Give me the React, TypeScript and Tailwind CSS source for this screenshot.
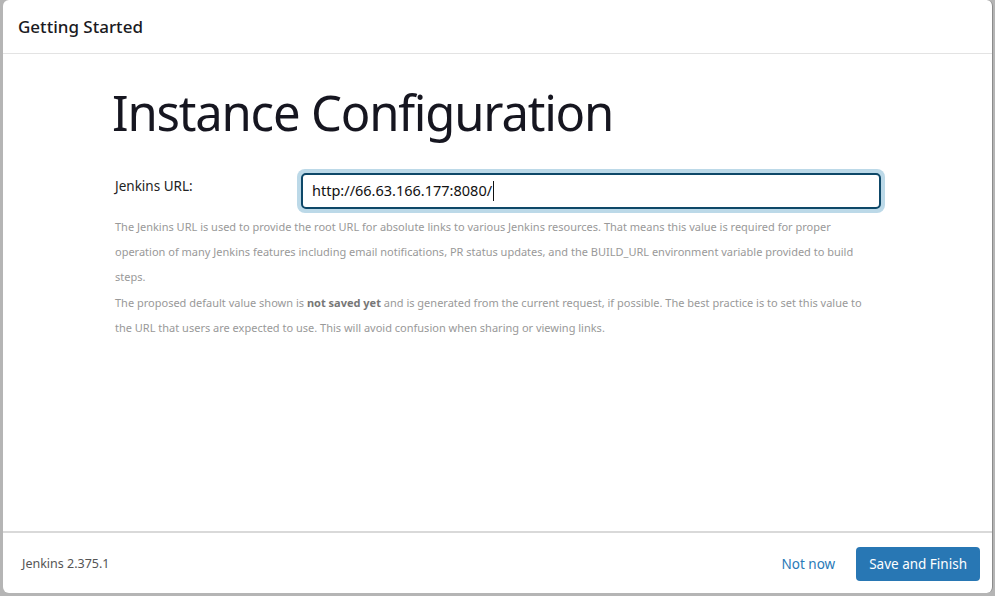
import React from 'react';

const font = { fontFamily: '"Noto Sans", "Open Sans", sans-serif' };

export default function App() {
  return (
    <div className="h-[596px] w-full bg-[#b5b5b5] pl-[3px] pr-[2px] pb-[3px]" style={font}>
      <div className="flex h-full flex-col rounded-md border-r border-[#8c8c8c] bg-white">
        {/* Header */}
        <div className="flex h-[54px] shrink-0 items-center border-b border-[#e3e3e3] px-[15px]">
          <h2 className="text-[17px] font-medium tracking-[0px] text-[#1a1a22]">Getting Started</h2>
        </div>

        {/* Body */}
        <div className="flex-1 pl-[109px] pr-[60px] pt-[26px]">
          <h1 className="text-[49px] font-normal leading-[64px] tracking-[-1.2px] text-[#161620]">
            Instance Configuration
          </h1>

          <div className="mt-[30px] flex items-start pl-[3px]">
            <label className="w-[182px] shrink-0 pt-[2px] text-[13.5px] text-[#222]">Jenkins URL:</label>
            <div className="-mt-[5px] w-[588px] shrink-0 rounded-[8px] bg-[#bcd9e8] p-[4px]">
              <div className="flex h-[36px] items-center rounded-[5px] border-2 border-[#0e4868] bg-white px-[9px] text-[14.5px] text-[#111]">
                http://66.63.166.177:8080/<span className="ml-px inline-block h-[20px] w-px bg-[#111]" />
              </div>
            </div>
          </div>

          <div className="mt-px pl-[3px] text-[11px] leading-[25.2px] text-[#999]">
            <p>
              <span className="block whitespace-nowrap">
                The Jenkins URL is used to provide the root URL for absolute links to various Jenkins resources. That means this value is required for proper
              </span>
              <span className="block whitespace-nowrap">
                operation of many Jenkins features including email notifications, PR status updates, and the <code style={font}>BUILD_URL</code> environment variable provided to build
              </span>
              <span className="block whitespace-nowrap">steps.</span>
            </p>
            <p>
              <span className="block whitespace-nowrap">
                The proposed default value shown is <strong className="font-bold text-[#777]">not saved yet</strong> and is generated from the current request, if possible. The best practice is to set this value to
              </span>
              <span className="block whitespace-nowrap">
                the URL that users are expected to use. This will avoid confusion when sharing or viewing links.
              </span>
            </p>
          </div>
        </div>

        {/* Footer */}
        <div className="flex h-[62px] shrink-0 items-center justify-between border-t-2 border-[#d9d9d9] pl-[19px] pr-[12px] pt-[2px]">
          <span className="text-[12.5px] text-[#555]">Jenkins 2.375.1</span>
          <div className="flex items-center gap-[21px]">
            <button className="text-[13.5px] text-[#2a7ab8]">Not now</button>
            <button className="h-[34px] rounded-[4px] bg-[#2877b4] px-[13px] text-[13.5px] text-white">
              Save and Finish
            </button>
          </div>
        </div>
      </div>
    </div>
  );
}
